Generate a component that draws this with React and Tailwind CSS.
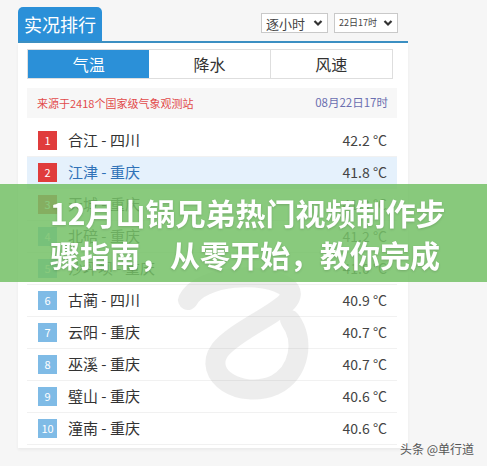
import React from "react";

const ROWS = [
  { rank: 1, name: "合江 - 四川", temp: "42.2 °C" },
  { rank: 2, name: "江津 - 重庆", temp: "41.8 °C", active: true },
  { rank: 3, name: "天城 - 重庆", temp: "41.3 °C" },
  { rank: 4, name: "北碚 - 重庆", temp: "41.2 °C" },
  { rank: 5, name: "沙坪坝 - 重庆", temp: "41.0 °C" },
  { rank: 6, name: "古蔺 - 四川", temp: "40.9 °C" },
  { rank: 7, name: "云阳 - 重庆", temp: "40.7 °C" },
  { rank: 8, name: "巫溪 - 重庆", temp: "40.7 °C" },
  { rank: 9, name: "璧山 - 重庆", temp: "40.6 °C" },
  { rank: 10, name: "潼南 - 重庆", temp: "40.6 °C" },
];

const FONT = { fontFamily: '"Noto Sans CJK SC", "Noto Sans", sans-serif' };

function Chevron() {
  return (
    <svg width="10" height="8" viewBox="0 0 10 8" className="shrink-0">
      <path d="M1.5 2 L5 5.5 L8.5 2" fill="none" stroke="#333" strokeWidth="2.2" />
    </svg>
  );
}

function Select({ label, small }) {
  return (
    <div className="h-[20px] bg-white border border-[#c9c9c9] flex items-center justify-between pl-[4px] pr-[4px]" style={{ width: small ? 64 : 67 }}>
      <span className={small ? "text-[9px] text-[#444]" : "text-[13px] text-[#444] leading-none"}>{label}</span>
      <Chevron />
    </div>
  );
}

function RankRow({ row }) {
  const red = row.rank <= 3;
  return (
    <div
      className={
        "h-[32px] flex items-center pl-[11px] pr-[10px] border-b border-[#f1f1f1] " +
        (row.active ? "bg-[#e5f1fc]" : "bg-white")
      }
    >
      <div
        className={
          "w-[19px] h-[19px] flex items-center justify-center text-[11px] text-white " +
          (red ? "bg-[#e03c3c]" : "bg-[#7fbbe6]")
        }
      >
        {row.rank}
      </div>
      <span className={"ml-[11px] text-[15px] " + (row.active ? "text-[#2f72b8]" : "text-[#333]")}>
        {row.name}
      </span>
      <span className="ml-auto text-[14px] text-[#444]">{row.temp}</span>
    </div>
  );
}

export default function App() {
  return (
    <div className="w-[487px] h-[466px] bg-[#f6f6f6] relative overflow-hidden" style={FONT}>
      <div className="pt-[7px] pl-[18px] w-[408px]">
        <div className="flex items-end justify-between border-b-2 border-[#3b8fc2] h-[36px]">
          <div className="w-[84px] h-[34px] bg-[#2b90d8] rounded-t-[5px] flex items-center justify-center text-white text-[18px]">
            实况排行
          </div>
          <div className="flex gap-[6px] mb-[8px] mr-[10px]">
            <Select label="逐小时" />
            <Select label="22日17时" small />
          </div>
        </div>

        <div className="bg-white pl-[9px] pr-[11px] pt-[6px] pb-[3px] shadow-[0_2px_3px_rgba(0,0,0,0.05)]">
          <div className="grid grid-cols-3 h-[30px] mr-[4px] border border-[#dedede] text-[16px]">
            <div className="bg-[#2b90d8] text-white flex items-center justify-center">气温</div>
            <div className="flex items-center justify-center text-[#333] border-r border-[#dedede]">降水</div>
            <div className="flex items-center justify-center text-[#333]">风速</div>
          </div>

          <div className="mt-[9px] h-[30px] bg-[#f7f7f7] flex items-center justify-between pl-[10px] pr-[9px] text-[11px]">
            <span className="text-[#e24b4b]">来源于2418个国家级气象观测站</span>
            <span className="text-[#6b6fb0] text-[11.5px]">08月22日17时</span>
          </div>

          <div className="mt-[7px]">
            {ROWS.map((row) => (
              <RankRow key={row.rank} row={row} />
            ))}
          </div>
        </div>
      </div>

      {/* faint watermark swirl */}
      <svg className="absolute left-[170px] top-[250px] pointer-events-none" width="150" height="160" viewBox="0 0 150 160">
        <path
          d="M18 50 C30 25, 95 20, 118 38 C135 55, 70 75, 50 100 C32 125, 70 150, 105 135 C130 122, 135 90, 120 70"
          fill="none"
          stroke="#8c8c8c"
          strokeOpacity="0.16"
          strokeWidth="20"
          strokeLinecap="round"
        />
      </svg>

      <div className="absolute left-0 right-0 top-[184px] h-[98px] bg-[rgba(118,193,104,0.86)] flex flex-col justify-center pl-[50px]">
        <div className="text-white font-bold text-[30px] leading-[42px] whitespace-nowrap drop-shadow-[0_1px_1px_rgba(0,0,0,0.15)]">
          12月山锅兄弟热门视频制作步
        </div>
        <div className="text-white font-bold text-[30px] leading-[42px] whitespace-nowrap drop-shadow-[0_1px_1px_rgba(0,0,0,0.15)]">
          骤指南，从零开始，教你完成
        </div>
      </div>

      <div className="absolute right-[13px] top-[440px] text-[12px] text-[#555]">头条 @单行道</div>
    </div>
  );
}
